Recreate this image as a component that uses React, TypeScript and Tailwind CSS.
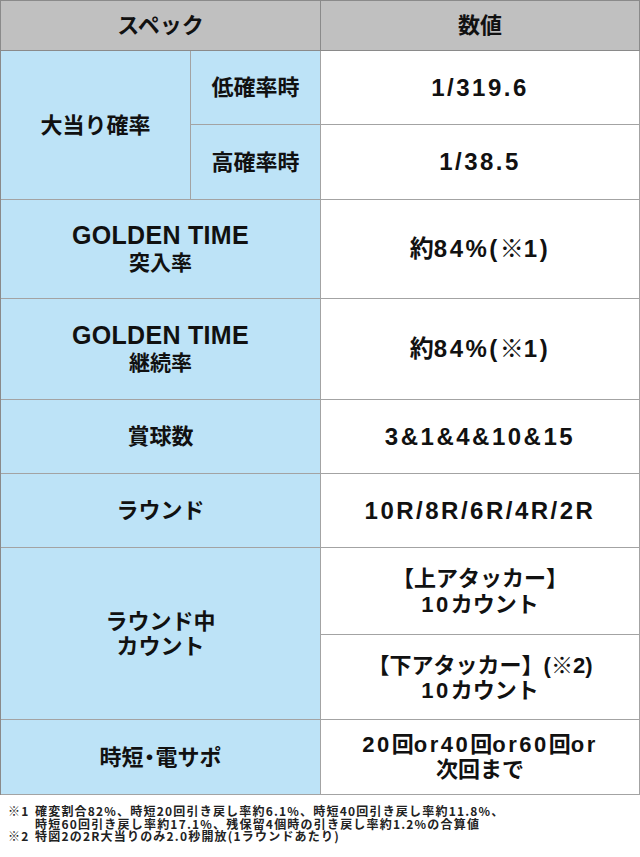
import React from 'react';

const label = 'flex flex-col items-center justify-center bg-[#bde3f7] border-r border-b border-[#a3a3a3] text-center';
const value = 'flex flex-col items-center justify-center bg-white border-r border-b border-[#a3a3a3] text-center';

const N = ({ children }: { children: React.ReactNode }) => <span className="tracking-[2.5px]">{children}</span>;

const App = () => {
    return (
        <div className="w-[640px] h-[857px] bg-white text-[#111] font-['Liberation_Sans','Noto_Sans_CJK_JP',sans-serif] font-bold">
            <div className="grid grid-cols-[190px_130px_319px] grid-rows-[50px_74px_75px_99px_101px_74px_74px_87px_85px_75px] border-l border-t border-[#8a8a8a]">
                {/* header */}
                <div className="col-span-2 flex items-center justify-center bg-[#c0c0c0] border-r border-b border-[#8a8a8a] text-[22px]">スペック</div>
                <div className="flex items-center justify-center bg-[#c0c0c0] border-r border-b border-[#8a8a8a] text-[22px]">数値</div>

                <div className={`${label} row-span-2 text-[22px]`}>大当り確率</div>
                <div className={`${label} text-[22px]`}>低確率時</div>
                <div className={`${value} text-[24px]`}><N>1/319.6</N></div>
                <div className={`${label} text-[22px]`}>高確率時</div>
                <div className={`${value} text-[24px]`}><N>1/38.5</N></div>

                <div className={`${label} col-span-2`}>
                    <span className="text-[25px] leading-[28px] tracking-[0.3px]">GOLDEN TIME</span>
                    <span className="text-[21px] leading-[28px]">突入率</span>
                </div>
                <div className={`${value} text-[24px]`}><span>約<N>84%(</N><span className="font-normal">※</span><N>1)</N></span></div>

                <div className={`${label} col-span-2`}>
                    <span className="text-[25px] leading-[28px] tracking-[0.3px]">GOLDEN TIME</span>
                    <span className="text-[21px] leading-[28px]">継続率</span>
                </div>
                <div className={`${value} text-[24px]`}><span>約<N>84%(</N><span className="font-normal">※</span><N>1)</N></span></div>

                <div className={`${label} col-span-2 text-[22px]`}>賞球数</div>
                <div className={`${value} text-[24px]`}><N>3&amp;1&amp;4&amp;10&amp;15</N></div>

                <div className={`${label} col-span-2 text-[22px]`}>ラウンド</div>
                <div className={`${value} text-[24px]`}><N>10R/8R/6R/4R/2R</N></div>

                <div className={`${label} col-span-2 row-span-2 text-[22px] leading-[25px]`}>
                    <span>ラウンド中</span>
                    <span>カウント</span>
                </div>
                <div className={`${value} text-[22px] leading-[26px] pt-[2px]`}>
                    <span>【上アタッカー】</span>
                    <span><N>10</N>カウント</span>
                </div>
                <div className={`${value} text-[22px] leading-[25px] pt-[2px]`}>
                    <span>【下アタッカー】(<span className="font-normal">※</span>2)</span>
                    <span><N>10</N>カウント</span>
                </div>

                <div className={`${label} col-span-2 text-[22px]`}>
                    <span>時短<span className="-mx-[5px]">・</span>電サポ</span>
                </div>
                <div className={`${value} text-[22px] leading-[25px]`}>
                    <span><N>20</N>回<N>or40</N>回<N>or60</N>回<N>or</N></span>
                    <span>次回まで</span>
                </div>
            </div>

            <div className="pt-[10px] pl-[8px] text-[12px] leading-[12.5px] tracking-[1.2px] text-[#222] font-['Noto_Sans_CJK_JP',sans-serif] font-bold">
                <div className="flex">
                    <span className="w-[27px] shrink-0">※1</span>
                    <div className="flex flex-col">
                        <span className="h-[12.5px]">確変割合82%、時短20回引き戻し率約6.1%、時短40回引き戻し率約11.8%、</span>
                        <span className="h-[12.5px]">時短60回引き戻し率約17.1%、残保留4個時の引き戻し率約1.2%の合算値</span>
                    </div>
                </div>
                <div className="flex">
                    <span className="w-[27px] shrink-0">※2</span>
                    <span className="h-[12.5px]">特図2の2R大当りのみ2.0秒開放(1ラウンドあたり)</span>
                </div>
            </div>
        </div>
    );
};

export default App;
